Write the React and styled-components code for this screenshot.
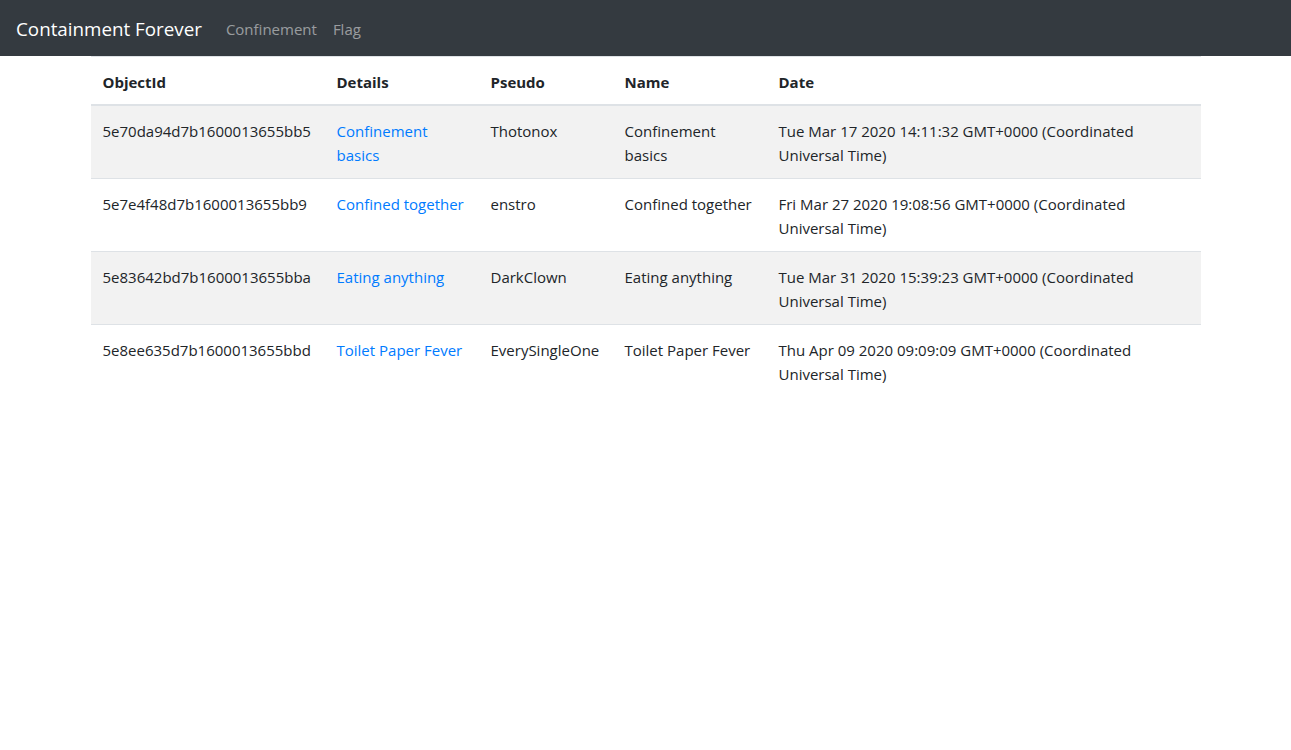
import React from "react";
import styled, { createGlobalStyle } from "styled-components";

const GlobalStyle = createGlobalStyle`
  body {
    margin: 0;
    font-family: "Segoe UI", "Open Sans", "Noto Sans", sans-serif;
    font-size: 15px;
    line-height: 24px;
    color: #212529;
    background: #fff;
  }
`;

const rows = [
  {
    id: "5e70da94d7b1600013655bb5",
    details: "Confinement basics",
    pseudo: "Thotonox",
    name: "Confinement basics",
    date: "Tue Mar 17 2020 14:11:32 GMT+0000 (Coordinated Universal Time)",
  },
  {
    id: "5e7e4f48d7b1600013655bb9",
    details: "Confined together",
    pseudo: "enstro",
    name: "Confined together",
    date: "Fri Mar 27 2020 19:08:56 GMT+0000 (Coordinated Universal Time)",
  },
  {
    id: "5e83642bd7b1600013655bba",
    details: "Eating anything",
    pseudo: "DarkClown",
    name: "Eating anything",
    date: "Tue Mar 31 2020 15:39:23 GMT+0000 (Coordinated Universal Time)",
  },
  {
    id: "5e8ee635d7b1600013655bbd",
    details: "Toilet Paper Fever",
    pseudo: "EverySingleOne",
    name: "Toilet Paper Fever",
    date: "Thu Apr 09 2020 09:09:09 GMT+0000 (Coordinated Universal Time)",
  },
];

const columns = [
  { label: "ObjectId", width: 234 },
  { label: "Details", width: 154 },
  { label: "Pseudo", width: 134 },
  { label: "Name", width: 154 },
  { label: "Date", width: 434 },
];

const App = () => {
  return (
    <>
      <GlobalStyle />
      <Navbar>
        <Brand href="#">Containment Forever</Brand>
        <NavList>
          <NavLink href="#">Confinement</NavLink>
          <NavLink href="#">Flag</NavLink>
        </NavList>
      </Navbar>
      <Container>
        <Table>
          <colgroup>
            {columns.map((col) => (
              <col key={col.label} style={{ width: col.width }} />
            ))}
          </colgroup>
          <thead>
            <tr>
              {columns.map((col) => (
                <Th key={col.label}>{col.label}</Th>
              ))}
            </tr>
          </thead>
          <tbody>
            {rows.map((row, index) => (
              <Row key={row.id} $striped={index % 2 === 0}>
                <Td>{row.id}</Td>
                <Td>
                  <DetailLink href="#">{row.details}</DetailLink>
                </Td>
                <Td>{row.pseudo}</Td>
                <Td>{row.name}</Td>
                <Td>{row.date}</Td>
              </Row>
            ))}
          </tbody>
        </Table>
      </Container>
    </>
  );
};

const Navbar = styled.nav`
  display: flex;
  align-items: center;
  height: 56px;
  box-sizing: border-box;
  padding: 9px 16px 7px;
  background: #343a40;
`;

const Brand = styled.a`
  font-size: 18.8px;
  line-height: 30px;
  padding: 5px 0;
  margin-right: 16px;
  color: #fff;
  text-decoration: none;
  white-space: nowrap;
`;

const NavList = styled.div`
  display: flex;
`;

const NavLink = styled.a`
  padding: 8px;
  color: rgba(255, 255, 255, 0.5);
  text-decoration: none;
`;

const Container = styled.div`
  max-width: 1110px;
  margin: 0 auto;
  padding: 0 15px;
`;

const Table = styled.table`
  width: 100%;
  table-layout: fixed;
  border-collapse: collapse;
  color: #212529;
`;

const Th = styled.th`
  padding: 13px 12px 10px;
  text-align: left;
  font-weight: 700;
  vertical-align: bottom;
  border-top: 1px solid #dee2e6;
  border-bottom: 2px solid #dee2e6;
`;

const Row = styled.tr`
  background: ${(p) => (p.$striped ? "rgba(0, 0, 0, 0.05)" : "transparent")};
`;

const Td = styled.td`
  padding: 13px 12px 11px;
  vertical-align: top;
  border-top: 1px solid #dee2e6;
`;

const DetailLink = styled.a`
  color: #007bff;
  text-decoration: none;
`;

export default App;
